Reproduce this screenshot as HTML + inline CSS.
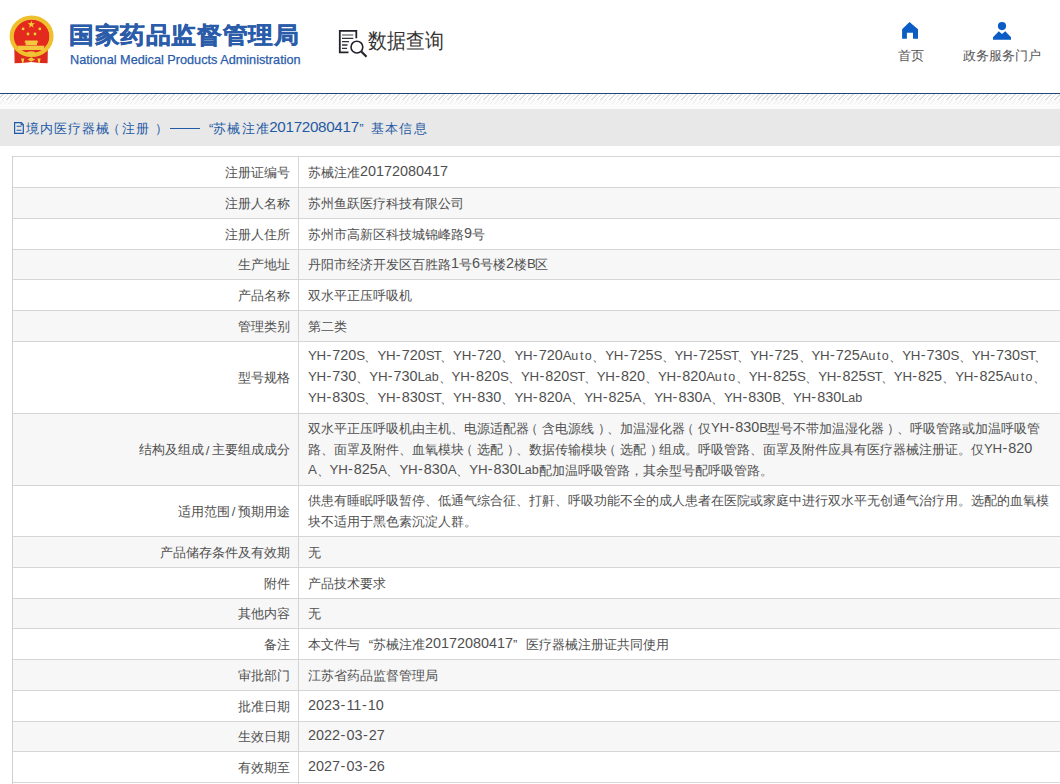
<!DOCTYPE html>
<html><head><meta charset="utf-8">
<style>
html,body{margin:0;padding:0;background:#fff;width:1060px;height:784px;overflow:hidden;}
body{font-family:"Liberation Sans",sans-serif;color:#505050;position:relative;}
.abs{position:absolute;}
#title{left:69px;top:15.5px;font-size:25px;letter-spacing:.6px;transform:scaleY(.93);transform-origin:0 29px;-webkit-text-stroke:.5px #2a5caa;font-weight:bold;color:#2a5caa;white-space:nowrap;line-height:36px;}
#en{left:70px;top:52.8px;font-family:"Liberation Sans",sans-serif;font-size:12.7px;color:#2a5caa;-webkit-text-stroke:.25px #2a5caa;white-space:nowrap;line-height:14px;}
#dq{left:367.5px;top:25.5px;font-size:20.5px;color:#333;line-height:30px;white-space:nowrap;transform:scaleX(.9);transform-origin:0 0;}
.nav{font-size:13px;color:#555;white-space:nowrap;line-height:16px;}
#bl{left:0;top:93px;width:1060px;height:1px;background:#1f4777;}
#hatch{left:0;top:94px;width:1060px;height:6px;background:repeating-linear-gradient(135deg,#fff 0,#fff 2.1px,#dedede 2.1px,#dedede 3.18px);}
#hatch2{left:0;top:100px;width:1060px;height:4px;background:repeating-linear-gradient(135deg,#fcfcfc 0,#fcfcfc 2.1px,#f2f2f2 2.1px,#f2f2f2 3.18px);}
#bg2{left:0;top:100px;width:1060px;height:9px;background:#fbfbfb;}
#crumb{left:0;top:109px;width:1060px;height:37px;background:#e8e8e8;}
.ct{top:119.5px;font-size:13px;color:#1f5aa5;white-space:nowrap;line-height:18px;}
.ql{display:inline-block;width:13px;text-align:right;}
.qr{display:inline-block;width:13px;text-align:left;}
.row{position:absolute;left:12px;width:1100px;border-bottom:1px solid #d6d6d6;box-sizing:border-box;}
.row.g{background:#f7f7f7;}
.lab{position:absolute;left:0;top:.7px;width:277.5px;display:flex;align-items:center;justify-content:flex-end;font-size:13px;white-space:nowrap;}
.val{position:absolute;left:296px;top:0;width:760px;display:flex;flex-direction:column;justify-content:center;font-size:13px;}
.ln{white-space:nowrap;height:21px;line-height:21px;position:relative;top:0px;}
.d,.h,.U,.S,.T,.B,.w,.t,.uo{vertical-align:1px;line-height:10px;}.d{font-size:14.4px;}.h{font-size:14.4px;margin-left:.6px;letter-spacing:1px;}.U{font-size:13.3px;letter-spacing:-.3px;}.S{font-size:13.3px;letter-spacing:-.8px;}.T{font-size:13.3px;letter-spacing:-1.8px;}.B{font-size:13.3px;letter-spacing:-1.3px;}.w{font-size:12.5px;}.t{font-size:12.5px;padding:0 1.25px;}.uo{font-size:12.5px;letter-spacing:.5px;}.sl{padding:0 2.2px;}.lp{position:relative;left:-3.6px;}.rp{position:relative;left:3.6px;}
#tb{left:12px;top:156px;width:1100px;height:1px;background:#d6d6d6;}
#lb{left:12px;top:156px;width:1px;height:628px;background:#d0d0d0;}
#cd{left:298px;top:156px;width:1px;height:628px;background:#d6d6d6;}
</style></head><body>

<svg class="abs" style="left:0;top:0" width="70" height="80" viewBox="0 0 70 80">
 <path d="M14.3 47 H47.9 L47.6 63.3 L40 63 L31.3 62 L22.5 63 L14.6 63.3 Z" fill="#dc2a1e"/>
 <ellipse cx="31.4" cy="36.4" rx="18.3" ry="17.2" fill="#e42a1e"/>
 <ellipse cx="31.6" cy="36.3" rx="19.9" ry="18.6" fill="none" stroke="#f0bf2c" stroke-width="4.2"/>
 <path d="M24.3 42.6 L25.3 40.4 H37.3 L38.3 42.6 Z M25.6 42.6 H37 V45.2 H25.6 Z" fill="#f4c740"/>
 <rect x="17.7" y="45.7" width="26.5" height="4.3" fill="#f4c740"/>
 <ellipse cx="31.1" cy="53.4" rx="4.3" ry="2.1" fill="#f2c33a"/>
 <path d="M21.1 58.6 H24.3 L23.3 63.2 H22.2 Z M37.4 58.6 H40.6 L39.6 63.2 H38.5 Z" fill="#f4cd50"/>
 <path d="M27.5 59.5 L31.1 57.3 L35.2 59.5 L31.1 61.8 Z" fill="#f2c33a"/>
 <polygon points="31.3,20.7 32.2,23.3 35,23.3 32.7,25 33.6,27.7 31.3,26 29,27.7 29.9,25 27.6,23.3 30.4,23.3" fill="#f5d232"/>
 <circle cx="23.1" cy="28.9" r="1.4" fill="#f5d232"/><circle cx="39.8" cy="28.9" r="1.4" fill="#f5d232"/>
 <circle cx="28" cy="34" r="1.4" fill="#f5d232"/><circle cx="35" cy="34" r="1.4" fill="#f5d232"/>
</svg>
<div id="title" class="abs">国家药品监督管理局</div>
<div id="en" class="abs">National Medical Products Administration</div>
<svg class="abs" style="left:335px;top:25px" width="40" height="36" viewBox="335 25 40 36">
 <path d="M348.5 52.4 H339.8 V30.9 H356.3 V38.3" fill="none" stroke="#23232d" stroke-width="1.8"/>
 <path d="M342 35 H353.3" stroke="#777" stroke-width="1.4"/><path d="M342 38.3 H353.3 M342 41.6 H349 M342 45 H347.5 M342 48.3 H347" stroke="#33333a" stroke-width="1.3"/>
 <circle cx="356.9" cy="47.1" r="5.9" fill="none" stroke="#23232d" stroke-width="1.6"/>
 <path d="M361.3 51.5 L366.5 56.7" stroke="#23232d" stroke-width="2.2"/>
</svg>
<div id="dq" class="abs">数据查询</div>
<svg class="abs" style="left:895px;top:15px" width="30" height="30" viewBox="895 15 30 30">
 <path d="M909.5 22.1 L918 29.2 V38.7 H913 V32.8 H906.9 V38.7 H902.1 V29.2 Z" fill="#0b5cc4"/>
</svg>
<div class="abs nav" style="left:898px;top:48px">首页</div>
<svg class="abs" style="left:985px;top:15px" width="35" height="30" viewBox="985 15 35 30">
 <circle cx="1002" cy="26.1" r="4.1" fill="#0b5cc4"/>
 <path d="M998.8 31.3 L1002 33.9 L1005.3 31.3 L1011 37.3 V39.7 H993 V37.3 Z" fill="#0b5cc4"/>
</svg>
<div class="abs nav" style="left:963px;top:48px">政务服务门户</div>
<div id="bl" class="abs"></div>
<div id="hatch" class="abs"></div>
<div id="bg2" class="abs"></div><div id="hatch2" class="abs"></div>
<div id="crumb" class="abs"></div>
<svg class="abs" style="left:8px;top:112px" width="20" height="30" viewBox="8 112 20 30">
 <path d="M14.6 122.6 H21.3 L23.3 124.6 V133.4 H14.6 Z" fill="none" stroke="#1f5aa5" stroke-width="1.2"/>
 <path d="M20.6 122.6 V125.2 H23.3 Z" fill="#1f5aa5"/>
 <path d="M16.6 126.3 H21.4 M16.6 130.3 H21.4" stroke="#1f5aa5" stroke-width="1.1"/>
</svg>
<div class="abs ct" style="left:26px;letter-spacing:1px">境内医疗器械</div><div class="abs ct" style="left:107.3px">（</div><div class="abs ct" style="left:122.2px;letter-spacing:.8px">注册</div><div class="abs ct" style="left:155.2px">）</div><div class="abs" style="left:170.3px;top:128px;width:29.5px;height:1.1px;background:#1f5aa5"></div><div class="abs ct" style="left:209px">“</div><div class="abs ct" style="left:212.9px;letter-spacing:1.4px">苏械注准</div><div class="abs ct" style="top:118.3px;left:269.2px;font-size:15.2px;letter-spacing:-.3px">20172080417</div><div class="abs ct" style="left:359.3px">”</div><div class="abs ct" style="left:371.3px;letter-spacing:1.1px">基本信息</div>
<div class="row" style="top:157px;height:31px">
 <div class="lab" style="height:30px">注册证编号</div>
 <div class="val" style="height:30px"><div class="ln">苏械注准<span class="d">20172080417</span></div></div>
</div>
<div class="row g" style="top:188px;height:31px">
 <div class="lab" style="height:30px">注册人名称</div>
 <div class="val" style="height:30px"><div class="ln">苏州鱼跃医疗科技有限公司</div></div>
</div>
<div class="row" style="top:219px;height:31px">
 <div class="lab" style="height:30px">注册人住所</div>
 <div class="val" style="height:30px"><div class="ln">苏州市高新区科技城锦峰路<span class="d">9</span>号</div></div>
</div>
<div class="row g" style="top:250px;height:30px">
 <div class="lab" style="height:29px">生产地址</div>
 <div class="val" style="height:29px"><div class="ln">丹阳市经济开发区百胜路<span class="d">1</span>号<span class="d">6</span>号楼<span class="d">2</span>楼<span class="B">B</span>区</div></div>
</div>
<div class="row" style="top:280px;height:31px">
 <div class="lab" style="height:30px">产品名称</div>
 <div class="val" style="height:30px"><div class="ln">双水平正压呼吸机</div></div>
</div>
<div class="row g" style="top:311px;height:31px">
 <div class="lab" style="height:30px">管理类别</div>
 <div class="val" style="height:30px"><div class="ln">第二类</div></div>
</div>
<div class="row" style="top:342px;height:72px">
 <div class="lab" style="height:71px">型号规格</div>
 <div class="val" style="height:71px"><div class="ln"><span class="U">Y</span><span class="U">H</span><span class="h">-</span><span class="d">720</span><span class="S">S</span>、<span class="U">Y</span><span class="U">H</span><span class="h">-</span><span class="d">720</span><span class="S">S</span><span class="T">T</span>、<span class="U">Y</span><span class="U">H</span><span class="h">-</span><span class="d">720</span>、<span class="U">Y</span><span class="U">H</span><span class="h">-</span><span class="d">720</span><span class="U">A</span><span class="uo">u</span><span class="t">t</span><span class="uo">o</span>、<span class="U">Y</span><span class="U">H</span><span class="h">-</span><span class="d">725</span><span class="S">S</span>、<span class="U">Y</span><span class="U">H</span><span class="h">-</span><span class="d">725</span><span class="S">S</span><span class="T">T</span>、<span class="U">Y</span><span class="U">H</span><span class="h">-</span><span class="d">725</span>、<span class="U">Y</span><span class="U">H</span><span class="h">-</span><span class="d">725</span><span class="U">A</span><span class="uo">u</span><span class="t">t</span><span class="uo">o</span>、<span class="U">Y</span><span class="U">H</span><span class="h">-</span><span class="d">730</span><span class="S">S</span>、<span class="U">Y</span><span class="U">H</span><span class="h">-</span><span class="d">730</span><span class="S">S</span><span class="T">T</span>、</div><div class="ln"><span class="U">Y</span><span class="U">H</span><span class="h">-</span><span class="d">730</span>、<span class="U">Y</span><span class="U">H</span><span class="h">-</span><span class="d">730</span><span class="U">L</span><span class="w">a</span><span class="w">b</span>、<span class="U">Y</span><span class="U">H</span><span class="h">-</span><span class="d">820</span><span class="S">S</span>、<span class="U">Y</span><span class="U">H</span><span class="h">-</span><span class="d">820</span><span class="S">S</span><span class="T">T</span>、<span class="U">Y</span><span class="U">H</span><span class="h">-</span><span class="d">820</span>、<span class="U">Y</span><span class="U">H</span><span class="h">-</span><span class="d">820</span><span class="U">A</span><span class="uo">u</span><span class="t">t</span><span class="uo">o</span>、<span class="U">Y</span><span class="U">H</span><span class="h">-</span><span class="d">825</span><span class="S">S</span>、<span class="U">Y</span><span class="U">H</span><span class="h">-</span><span class="d">825</span><span class="S">S</span><span class="T">T</span>、<span class="U">Y</span><span class="U">H</span><span class="h">-</span><span class="d">825</span>、<span class="U">Y</span><span class="U">H</span><span class="h">-</span><span class="d">825</span><span class="U">A</span><span class="uo">u</span><span class="t">t</span><span class="uo">o</span>、</div><div class="ln"><span class="U">Y</span><span class="U">H</span><span class="h">-</span><span class="d">830</span><span class="S">S</span>、<span class="U">Y</span><span class="U">H</span><span class="h">-</span><span class="d">830</span><span class="S">S</span><span class="T">T</span>、<span class="U">Y</span><span class="U">H</span><span class="h">-</span><span class="d">830</span>、<span class="U">Y</span><span class="U">H</span><span class="h">-</span><span class="d">820</span><span class="U">A</span>、<span class="U">Y</span><span class="U">H</span><span class="h">-</span><span class="d">825</span><span class="U">A</span>、<span class="U">Y</span><span class="U">H</span><span class="h">-</span><span class="d">830</span><span class="U">A</span>、<span class="U">Y</span><span class="U">H</span><span class="h">-</span><span class="d">830</span><span class="B">B</span>、<span class="U">Y</span><span class="U">H</span><span class="h">-</span><span class="d">830</span><span class="U">L</span><span class="w">a</span><span class="w">b</span></div></div>
</div>
<div class="row g" style="top:414px;height:72px">
 <div class="lab" style="height:71px">结构及组成<span class="sl">/</span>主要组成成分</div>
 <div class="val" style="height:71px"><div class="ln">双水平正压呼吸机由主机、电源适配器<span class="lp">（</span>含电源线<span class="rp">）</span>、加温湿化器<span class="lp">（</span>仅<span class="U">Y</span><span class="U">H</span><span class="h">-</span><span class="d">830</span><span class="B">B</span>型号不带加温湿化器<span class="rp">）</span>、呼吸管路或加温呼吸管</div><div class="ln">路、面罩及附件、血氧模块<span class="lp">（</span>选配<span class="rp">）</span>、数据传输模块<span class="lp">（</span>选配<span class="rp">）</span>组成。呼吸管路、面罩及附件应具有医疗器械注册证。仅<span class="U">Y</span><span class="U">H</span><span class="h">-</span><span class="d">820</span></div><div class="ln"><span class="U">A</span>、<span class="U">Y</span><span class="U">H</span><span class="h">-</span><span class="d">825</span><span class="U">A</span>、<span class="U">Y</span><span class="U">H</span><span class="h">-</span><span class="d">830</span><span class="U">A</span>、<span class="U">Y</span><span class="U">H</span><span class="h">-</span><span class="d">830</span><span class="U">L</span><span class="w">a</span><span class="w">b</span>配加温呼吸管路，其余型号配呼吸管路。</div></div>
</div>
<div class="row" style="top:486px;height:51px">
 <div class="lab" style="height:50px">适用范围<span class="sl">/</span>预期用途</div>
 <div class="val" style="height:50px"><div class="ln">供患有睡眠呼吸暂停、低通气综合征、打鼾、呼吸功能不全的成人患者在医院或家庭中进行双水平无创通气治疗用。选配的血氧模</div><div class="ln">块不适用于黑色素沉淀人群。</div></div>
</div>
<div class="row g" style="top:537px;height:31px">
 <div class="lab" style="height:30px">产品储存条件及有效期</div>
 <div class="val" style="height:30px"><div class="ln">无</div></div>
</div>
<div class="row" style="top:568px;height:31px">
 <div class="lab" style="height:30px">附件</div>
 <div class="val" style="height:30px"><div class="ln">产品技术要求</div></div>
</div>
<div class="row g" style="top:599px;height:30px">
 <div class="lab" style="height:29px">其他内容</div>
 <div class="val" style="height:29px"><div class="ln">无</div></div>
</div>
<div class="row" style="top:629px;height:31px">
 <div class="lab" style="height:30px">备注</div>
 <div class="val" style="height:30px"><div class="ln">本文件与<span class="ql">“</span>苏械注准<span class="d">20172080417</span><span class="qr">”</span>医疗器械注册证共同使用</div></div>
</div>
<div class="row g" style="top:660px;height:31px">
 <div class="lab" style="height:30px">审批部门</div>
 <div class="val" style="height:30px"><div class="ln">江苏省药品监督管理局</div></div>
</div>
<div class="row" style="top:691px;height:31px">
 <div class="lab" style="height:30px">批准日期</div>
 <div class="val" style="height:30px"><div class="ln"><span class="d">2023</span><span class="h">-</span><span class="d">11</span><span class="h">-</span><span class="d">10</span></div></div>
</div>
<div class="row g" style="top:722px;height:30px">
 <div class="lab" style="height:29px">生效日期</div>
 <div class="val" style="height:29px"><div class="ln"><span class="d">2022</span><span class="h">-</span><span class="d">03</span><span class="h">-</span><span class="d">27</span></div></div>
</div>
<div class="row" style="top:752px;height:31px">
 <div class="lab" style="height:30px">有效期至</div>
 <div class="val" style="height:30px"><div class="ln"><span class="d">2027</span><span class="h">-</span><span class="d">03</span><span class="h">-</span><span class="d">26</span></div></div>
</div>
<div id="tb" class="abs"></div>
<div id="lb" class="abs"></div>
<div id="cd" class="abs"></div>
</body></html>
